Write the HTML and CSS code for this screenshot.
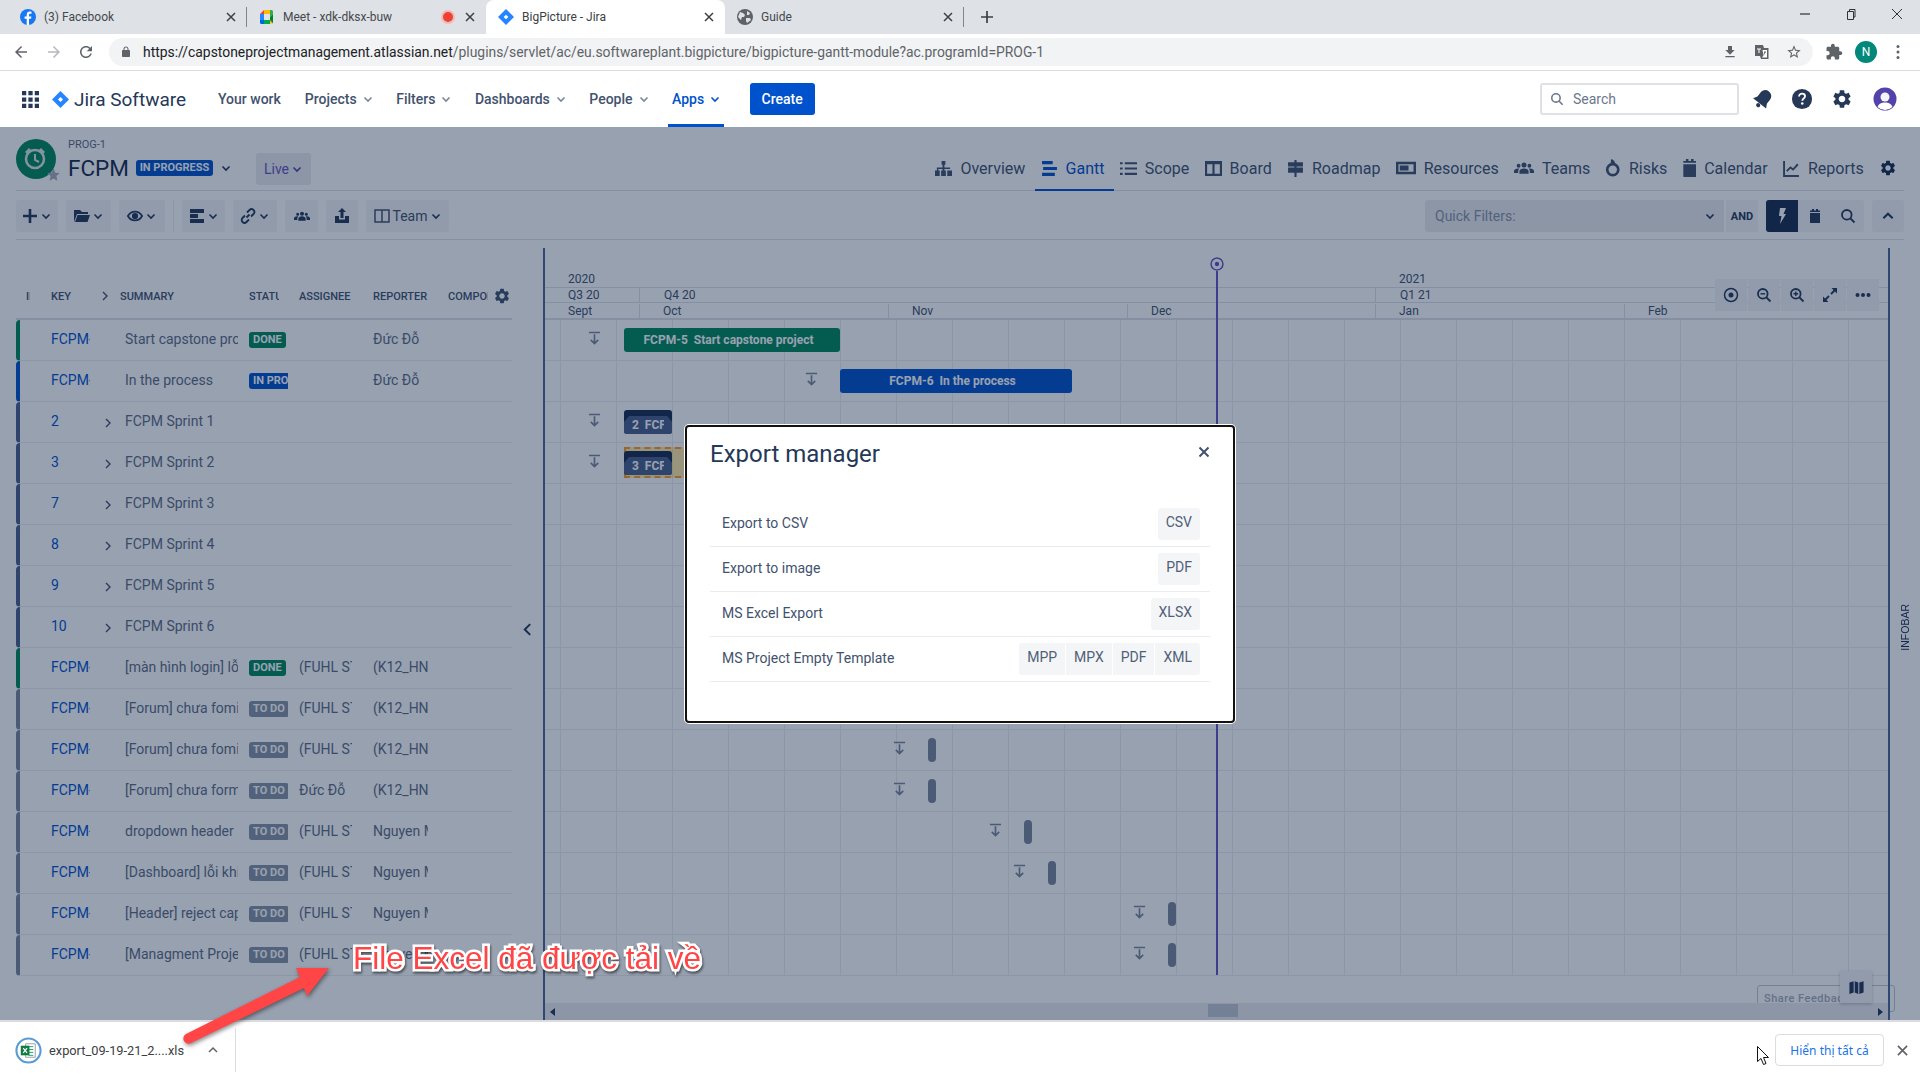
FILE: index.html
```html
<!DOCTYPE html>
<html lang="en">
<head>
    <meta charset="UTF-8">
    <title>BigPicture - Jira</title>
    <link rel="stylesheet" href="styles.css">
</head>
<body>
    <svg class="sprite" xmlns="http://www.w3.org/2000/svg">
        <symbol id="i-jira" viewBox="0 0 24 24"><path fill="#2684ff" d="M12 0l12 12-12 12L0 12z"/><path fill="#fff" d="M12 8.500l3.500 3.500-3.500 3.500L8.500 12z"/></symbol>
        <symbol id="i-x" viewBox="0 0 12 12"><path d="M2 2l8 8M10 2l-8 8" fill="none" stroke="currentColor" stroke-width="1.500"/></symbol>
        <symbol id="i-down" viewBox="0 0 12 12"><path d="M2.500 4.500L6 8l3.500-3.500" fill="none" stroke="currentColor" stroke-width="1.600"/></symbol>
        <symbol id="i-right" viewBox="0 0 12 12"><path d="M4 2l4 4-4 4" fill="none" stroke="currentColor" stroke-width="1.400"/></symbol>
        <symbol id="i-search" viewBox="0 0 16 16"><circle cx="6.800" cy="6.800" r="4.800" fill="none" stroke="currentColor" stroke-width="1.800"/><path d="M10.500 10.500L14.500 14.500" stroke="currentColor" stroke-width="1.800"/></symbol>
        <symbol id="i-gear" viewBox="0 0 24 24"><path fill="currentColor" d="M19.140 12.940c.04-.3.06-.61.06-.94 0-.32-.02-.64-.07-.94l2.030-1.580c.18-.14.23-.41.12-.61l-1.920-3.320c-.12-.22-.37-.29-.59-.22l-2.390.96c-.5-.38-1.030-.7-1.620-.94l-.36-2.540c-.04-.24-.24-.41-.48-.41h-3.840c-.24 0-.43.17-.47.41l-.36 2.540c-.59.24-1.130.57-1.620.94l-2.390-.96c-.22-.08-.47 0-.59.22L2.740 8.870c-.12.21-.08.47.12.61l2.030 1.580c-.05.3-.09.63-.09.94s.02.64.07.94l-2.030 1.580c-.18.14-.23.41-.12.61l1.920 3.320c.12.22.37.29.59.22l2.390-.96c.5.38 1.030.7 1.620.94l.36 2.540c.05.24.24.41.48.41h3.840c.24 0 .44-.17.47-.41l.36-2.540c.59-.24 1.130-.56 1.620-.94l2.390.96c.22.08.47 0 .59-.22l1.920-3.320c.12-.22.07-.47-.12-.61l-2.010-1.580zM12 15.600c-1.980 0-3.600-1.620-3.600-3.600s1.620-3.600 3.600-3.600 3.600 1.620 3.600 3.600-1.620 3.600-3.600 3.600z"/></symbol>
        <symbol id="i-people" viewBox="0 0 24 24"><path fill="currentColor" d="M12 5.500a3 3 0 110 6 3 3 0 010-6zM5.500 7a2.300 2.300 0 110 4.600 2.300 2.300 0 010-4.600zm13 0a2.300 2.300 0 110 4.600 2.300 2.300 0 010-4.600zM12 12.500c3 0 5.500 1.500 5.500 3.500v3h-11v-3c0-2 2.500-3.500 5.500-3.500zM5 12.500c.5 0 1 0 1.400.2C5.500 13.500 5 14.700 5 16v2H0v-2.500c0-1.600 2.200-3 5-3zm14 0c2.800 0 5 1.400 5 3V18h-5v-2c0-1.300-.5-2.500-1.400-3.300.4-.2.9-.2 1.400-.2z"/></symbol>
        <symbol id="i-cal" viewBox="0 0 16 16"><path fill="currentColor" d="M3 5h10v9.500a.5.5 0 01-.5.500h-9a.5.5 0 01-.5-.5zM3 2.500h2V1h2v1.500h2V1h2v1.500h2V4H3z"/></symbol>
        <symbol id="i-drop" viewBox="0 0 14 16"><path d="M1 1.500h12M7 3.500v10M3 9.500l4 4 4-4" fill="none" stroke="currentColor" stroke-width="1.800"/></symbol>
    </svg>

    <div class="tabstrip">
        <div class="tab tab-sep">
            <svg class="fav" viewBox="0 0 16 16"><circle cx="8" cy="8" r="8" fill="#1877f2"/><path fill="#fff" d="M9 16V9.800h2l.4-2.400H9V6c0-.7.3-1.200 1.300-1.200h1.200V2.700C11 2.600 10.400 2.500 9.800 2.500 8 2.500 6.700 3.600 6.700 5.700v1.700H4.600v2.400h2.100V16z"/></svg>
            <span class="tab-title">(3) Facebook</span>
            <svg class="tab-x"><use href="#i-x"/></svg>
        </div>
        <div class="tab">
            <svg class="fav" viewBox="0 0 16 16"><path fill="#ea4335" d="M1 5l4-4v4z"/><path fill="#fbbc04" d="M5 1h6v4H5z"/><path fill="#34a853" d="M11 1h1.500A1.500 1.500 0 0114 2.500V5l-3 3z"/><path fill="#00832d" d="M11 8l3-3v9.500l-3-3z"/><path fill="#2684fc" d="M1 5h4v6H1z"/><path fill="#0066da" d="M1 11h4v4H2.500A1.500 1.500 0 011 13.500z"/><path fill="#00ac47" d="M5 11h6v4H5z"/><path fill="#ffba00" d="M11 11l3 3.500H11z"/></svg>
            <span class="tab-title">Meet - xdk-dksx-buw</span>
            <span class="rec"></span>
            <svg class="tab-x"><use href="#i-x"/></svg>
        </div>
        <div class="tab tab-active">
            <svg class="fav"><use href="#i-jira"/></svg>
            <span class="tab-title">BigPicture - Jira</span>
            <svg class="tab-x"><use href="#i-x"/></svg>
        </div>
        <div class="tab tab-sep">
            <svg class="fav" viewBox="0 0 16 16"><circle cx="8" cy="8" r="8" fill="#5f6368"/><path fill="#dee1e6" d="M3 3l3 1 2 2-1 2-2 0-1 3-3-3zM10 2l3 2-1 2-2 0zM9 9l4 0 1 2-4 3-1-2z"/></svg>
            <span class="tab-title">Guide</span>
            <svg class="tab-x"><use href="#i-x"/></svg>
        </div>
        <svg class="new-tab" viewBox="0 0 12 12"><path d="M6 0v12M0 6h12" stroke="#3c4043" stroke-width="1.700"/></svg>
        <div class="win-controls">
            <svg viewBox="0 0 12 12"><path d="M1 6h10" stroke="#333" stroke-width="1.200"/></svg>
            <svg viewBox="0 0 12 12"><path d="M2.500 3.500h6v8h-6zM4.500 3.500v-2h5.500v7.500H8.500" fill="none" stroke="#333"/></svg>
            <svg viewBox="0 0 12 12"><path d="M1 1l10 10M11 1L1 11" stroke="#333"/></svg>
        </div>
    </div>

    <div class="addressbar">
        <svg class="addr-ico" viewBox="0 0 24 24"><path fill="#5f6368" d="M20 11H7.830l5.590-5.590L12 4l-8 8 8 8 1.410-1.410L7.830 13H20v-2z"/></svg>
        <svg class="addr-ico" viewBox="0 0 24 24"><path fill="#b5b8bc" d="M12 4l-1.410 1.410L16.170 11H4v2h12.170l-5.580 5.590L12 20l8-8z"/></svg>
        <svg class="addr-ico" viewBox="0 0 24 24"><path fill="#5f6368" d="M17.650 6.350C16.200 4.900 14.210 4 12 4c-4.420 0-7.990 3.580-7.990 8s3.570 8 7.990 8c3.730 0 6.840-2.550 7.730-6h-2.080c-.82 2.330-3.040 4-5.650 4-3.310 0-6-2.690-6-6s2.690-6 6-6c1.660 0 3.140.69 4.220 1.780L13 11h7V4l-2.350 2.350z"/></svg>
        <div class="omnibox">
            <svg class="lock" viewBox="0 0 24 24"><path fill="#5f6368" d="M18 8h-1V6c0-2.760-2.240-5-5-5S7 3.240 7 6v2H6c-1.100 0-2 .9-2 2v10c0 1.100.9 2 2 2h12c1.100 0 2-.9 2-2V10c0-1.100-.9-2-2-2zM9 6c0-1.660 1.340-3 3-3s3 1.340 3 3v2H9V6z"/></svg>
            <span class="url"><b>https://capstoneprojectmanagement.atlassian.net</b>/plugins/servlet/ac/eu.softwareplant.bigpicture/bigpicture-gantt-module?ac.programId=PROG-1</span>
            <svg class="omni-ico" viewBox="0 0 24 24"><path fill="#5f6368" d="M19 9h-4V3H9v6H5l7 7 7-7zM5 18v2h14v-2H5z"/></svg>
            <svg class="omni-ico" viewBox="0 0 16 16"><path fill="#5f6368" d="M1 1h8l1 3h4.500v11H7l-1-3H1z"/><path fill="#fff" d="M3 4.500h4v1H5.500V9h-1V5.500H3zM8.500 6h4.500v7.500H8l1.500-2z"/><path fill="#5f6368" d="M10 7.500h2v1h-.6l-1 2h-1l1-2H10z"/></svg>
            <svg class="omni-ico" viewBox="0 0 24 24"><path fill="#5f6368" d="M22 9.240l-7.190-.62L12 2 9.190 8.630 2 9.240l5.460 4.730L5.820 21 12 17.270 18.180 21l-1.630-7.030L22 9.240zM12 15.400l-3.760 2.270 1-4.280-3.320-2.880 4.380-.38L12 6.100l1.710 4.040 4.380.38-3.320 2.880 1 4.280L12 15.400z"/></svg>
        </div>
        <svg class="puzzle" viewBox="0 0 24 24"><path fill="#5f6368" d="M20.500 11H19V7c0-1.100-.9-2-2-2h-4V3.500C13 2.120 11.880 1 10.500 1S8 2.120 8 3.500V5H4c-1.100 0-1.990.9-1.990 2v3.800H3.500c1.490 0 2.700 1.210 2.700 2.700s-1.210 2.700-2.700 2.700H2V20c0 1.100.9 2 2 2h3.800v-1.500c0-1.490 1.210-2.700 2.700-2.700 1.490 0 2.700 1.210 2.700 2.700V22H17c1.100 0 2-.9 2-2v-4h1.500c1.380 0 2.500-1.120 2.500-2.500S21.880 11 20.500 11z"/></svg>
        <span class="chrome-avatar">N</span>
        <svg class="dots" viewBox="0 0 4 16"><circle cx="2" cy="2.500" r="1.500" fill="#5f6368"/><circle cx="2" cy="8" r="1.500" fill="#5f6368"/><circle cx="2" cy="13.500" r="1.500" fill="#5f6368"/></svg>
    </div>

    <nav class="topnav">
        <svg class="app-grid" viewBox="0 0 16 16"><path fill="#253858" d="M0 0h4v4H0zM6 0h4v4H6zM12 0h4v4h-4zM0 6h4v4H0zM6 6h4v4H6zM12 6h4v4h-4zM0 12h4v4H0zM6 12h4v4H6zM12 12h4v4h-4z"/></svg>
        <svg class="logo"><use href="#i-jira"/></svg>
        <span class="brand">Jira Software</span>
        <div class="nav-items">
            <a class="nav-item">Your work</a>
            <a class="nav-item">Projects<svg class="caret"><use href="#i-down"/></svg></a>
            <a class="nav-item">Filters<svg class="caret"><use href="#i-down"/></svg></a>
            <a class="nav-item">Dashboards<svg class="caret"><use href="#i-down"/></svg></a>
            <a class="nav-item">People<svg class="caret"><use href="#i-down"/></svg></a>
            <a class="nav-item nav-active">Apps<svg class="caret"><use href="#i-down"/></svg></a>
            <button class="create">Create</button>
        </div>
        <div class="nav-right">
            <div class="search"><svg><use href="#i-search"/></svg><span>Search</span></div>
            <svg class="nav-ico nav-bell" viewBox="0 0 24 24"><g transform="rotate(38 12 12)"><path fill="#253858" d="M12 1.500c-4 0-6.500 3-6.500 6.800v5.200L3 18h18l-2.500-4.500V8.300c0-3.800-2.500-6.800-6.500-6.800z"/><circle cx="12" cy="20.500" r="2.300" fill="#253858"/></g></svg>
            <svg class="nav-ico" viewBox="0 0 24 24"><circle cx="12" cy="12" r="11" fill="#253858"/><path d="M8.800 9.300c0-2 1.500-3.100 3.300-3.100 1.900 0 3.200 1.100 3.200 2.800 0 2.400-3 2.500-3 4.900" fill="none" stroke="#fff" stroke-width="2"/><circle cx="12.300" cy="17" r="1.400" fill="#fff"/></svg>
            <svg class="nav-ico" viewBox="0 0 24 24"><use href="#i-gear" color="#253858"/></svg>
            <svg class="nav-ico nav-user" viewBox="0 0 24 24"><circle cx="12" cy="12" r="11.500" fill="#5243aa"/><circle cx="12" cy="10" r="4.500" fill="#fff" opacity=".95"/><path d="M4.500 20c1.500-3.500 4-4.500 7.500-4.500s6 1 7.500 4.500A11 11 0 014.500 20z" fill="#fff"/></svg>
        </div>
    </nav>

    <main class="app">
        <header class="project-head">
            <div class="project-logo">
                <svg viewBox="0 0 40 40"><circle cx="20" cy="20" r="20" fill="#00875a"/><circle cx="19" cy="20" r="9" fill="none" stroke="#dfe7e4" stroke-width="2.500"/><path d="M19 15v6l4 2" fill="none" stroke="#dfe7e4" stroke-width="2"/><path fill="#dfe7e4" d="M9 13l4-4 2 2-4 4zM29 13l-4-4-2 2 4 4z"/></svg>
                <svg class="fav-star" viewBox="0 0 24 24"><path fill="#a5adba" d="M12 2l3 7 7 .6-5.400 4.700L18.200 22 12 18.300 5.800 22l1.600-7.700L2 9.600 9 9z"/></svg>
            </div>
            <div class="project-name">
                <div class="project-key">PROG-1</div>
                <div class="project-title">
                    <span class="title">FCPM</span>
                    <span class="state">IN PROGRESS</span>
                    <svg class="state-caret"><use href="#i-down"/></svg>
                </div>
            </div>
            <div class="live">Live<svg class="caret"><use href="#i-down"/></svg></div>
            <div class="view-tabs">
                <a class="view-tab"><svg viewBox="0 0 18 16"><path fill="currentColor" d="M7 0h4v4H7zM8 4h2v3h6v3h2v0h-2V8.500H10V10H8V8.500H3.500V10H2V7h6zM0 10h5v6H0zM6.500 10h5v6h-5zM13 10h5v6h-5z"/></svg>Overview</a>
                <a class="view-tab view-active"><svg viewBox="0 0 16 16"><path fill="currentColor" d="M1 1h10v3H1zM2 6.500h13v3H2zM1 12h12v3H1z"/></svg>Gantt</a>
                <a class="view-tab"><svg viewBox="0 0 16 16"><path fill="currentColor" d="M0 2h2.500v2H0zM4.500 2H16v2H4.500zM0 7h2.500v2H0zM4.500 7H16v2H4.500zM0 12h2.500v2H0zM4.500 12H16v2H4.500z"/></svg>Scope</a>
                <a class="view-tab"><svg viewBox="0 0 16 16"><path fill="none" stroke="currentColor" stroke-width="2" d="M1 2h14v12H1zM8 2v12"/><path fill="currentColor" d="M1 2h14v2H1z"/></svg>Board</a>
                <a class="view-tab"><svg viewBox="0 0 16 16"><path fill="currentColor" d="M7 0h2v2h6v4H9v1h6v5H9v4H7v-4H1V7h6V6H1V2h6z"/></svg>Roadmap</a>
                <a class="view-tab vt-wide"><svg viewBox="0 0 16 16"><path fill="none" stroke="currentColor" stroke-width="2" d="M1 4h14v8H1z"/><path fill="currentColor" d="M3 6h7v4H3z"/></svg>Resources</a>
                <a class="view-tab vt-wide"><svg viewBox="0 0 24 24"><use href="#i-people"/></svg>Teams</a>
                <a class="view-tab vt-risk"><svg viewBox="1 0 14 16"><path fill="none" stroke="currentColor" stroke-width="2.400" d="M8 4.500a5 5 0 110 10 5 5 0 010-10z"/><path fill="currentColor" d="M6.500 0c1.500 0 3.500 1.500 4 5H6z"/></svg>Risks</a>
                <a class="view-tab vt-cal"><svg viewBox="3 1 10 14"><path fill="currentColor" d="M3 5h10v9.500a.5.5 0 01-.5.500h-9a.5.5 0 01-.5-.5zM3 2.500h2V1h2v1.500h2V1h2v1.500h2V4H3z"/></svg>Calendar</a>
                <a class="view-tab"><svg viewBox="0 0 16 16"><path fill="none" stroke="currentColor" stroke-width="1.800" d="M1 1v14h14M3.500 10.500L7 7l2.500 2L14 4"/></svg>Reports</a>
                <svg class="view-gear" viewBox="0 0 24 24"><use href="#i-gear"/></svg>
            </div>
        </header>

        <div class="toolbar">
            <div class="tool tool-add"><svg class="t-ico" viewBox="0 0 16 16"><path d="M8 1v14M1 8h14" stroke="currentColor" stroke-width="2.600"/></svg><svg class="caret"><use href="#i-down"/></svg></div>
            <div class="tool tool-w45"><svg class="t-ico" viewBox="0 0 16 16"><path fill="currentColor" d="M0 2h6l2 2h6v2H3L0 14zM3.500 7H16l-2.500 7H1z"/></svg><svg class="caret"><use href="#i-down"/></svg></div>
            <div class="tool tool-w46"><svg class="t-ico" viewBox="0 0 18 16"><path fill="none" stroke="currentColor" stroke-width="2" d="M1 8c2-3.500 4.500-5 8-5s6 1.500 8 5c-2 3.500-4.500 5-8 5s-6-1.500-8-5z"/><circle cx="9" cy="8" r="3.500" fill="currentColor"/></svg><svg class="caret"><use href="#i-down"/></svg></div>
            <span class="tool-sep"></span>
            <div class="tool tool-w43"><svg class="t-ico" viewBox="0 0 16 16"><path fill="currentColor" d="M1 1h14v4H1zM1 6h8v4H1zM1 11h14v4H1z"/></svg><svg class="caret"><use href="#i-down"/></svg></div>
            <div class="tool tool-w44"><svg class="t-ico" viewBox="0 0 16 16"><path fill="none" stroke="currentColor" stroke-width="1.800" d="M6.500 9.500l3-3M5 7.500l-2.500 2.500a2.800 2.800 0 004 4l2.500-2.500M11 8.500l2.500-2.500a2.800 2.800 0 00-4-4L7 4.500"/></svg><svg class="caret"><use href="#i-down"/></svg></div>
            <div class="tool tool-w33"><svg class="t-ico" viewBox="0 0 24 24"><use href="#i-people"/></svg></div>
            <div class="tool tool-w32"><svg class="t-ico" viewBox="0 0 16 16"><path fill="currentColor" d="M8 0l4 4H9.500v6h-3V4H4zM1 8h4v3.500h6V8h4v7H1z"/></svg></div>
            <div class="tool tool-team"><svg class="t-ico" viewBox="0 0 16 16"><path fill="none" stroke="currentColor" stroke-width="1.500" d="M1 2h14v12H1zM8 2v12"/></svg><span>Team</span><svg class="caret"><use href="#i-down"/></svg></div>
            <div class="toolbar-right">
                <div class="quick">Quick Filters:<svg class="caret"><use href="#i-down"/></svg></div>
                <div class="tool tool-and">AND</div>
                <div class="tool tool-bolt"><svg class="t-ico" viewBox="0 0 16 16"><path fill="#fff" d="M6 0h6L9.500 6H12L6 16l1.500-8H5z"/></svg></div>
                <div class="tool tool-cal"><svg class="t-ico" viewBox="0 0 16 16"><use href="#i-cal"/></svg></div>
                <div class="tool tool-find"><svg class="t-ico"><use href="#i-search"/></svg></div>
                <div class="tool tool-up"><svg class="t-ico" viewBox="0 0 12 12"><path d="M2 8l4-4 4 4" fill="none" stroke="currentColor" stroke-width="1.800"/></svg></div>
            </div>
        </div>

        <section class="gantt">
            <div class="grid-panel">
                <div class="grid-head">
                    <span class="h-id">ID</span>
                    <span class="h-key">KEY</span>
                    <svg class="h-arrow"><use href="#i-right"/></svg>
                    <span class="h-summary">SUMMARY</span>
                    <span class="h-status">STATUS</span>
                    <span class="h-assignee">ASSIGNEE</span>
                    <span class="h-reporter">REPORTER</span>
                    <span class="h-compo">COMPONENT</span>
                    <svg class="h-gear" viewBox="0 0 24 24"><use href="#i-gear"/></svg>
                </div>
                <div class="row row-green"><span class="c-key">FCPM-5</span><span class="c-exp"></span><span class="c-sum">Start capstone project</span><span class="c-status"><i class="badge b-done">DONE</i></span><span class="c-ass"></span><span class="c-rep">Đức Đỗ</span></div>
                <div class="row row-blue"><span class="c-key">FCPM-6</span><span class="c-exp"></span><span class="c-sum">In the process</span><span class="c-status"><i class="badge b-prog">IN PROGRESS</i></span><span class="c-ass"></span><span class="c-rep">Đức Đỗ</span></div>
                <div class="row row-navy"><span class="c-key">2</span><span class="c-exp"><svg><use href="#i-right"/></svg></span><span class="c-sum">FCPM Sprint 1</span></div>
                <div class="row row-navy"><span class="c-key">3</span><span class="c-exp"><svg><use href="#i-right"/></svg></span><span class="c-sum">FCPM Sprint 2</span></div>
                <div class="row row-navy"><span class="c-key">7</span><span class="c-exp"><svg><use href="#i-right"/></svg></span><span class="c-sum">FCPM Sprint 3</span></div>
                <div class="row row-navy"><span class="c-key">8</span><span class="c-exp"><svg><use href="#i-right"/></svg></span><span class="c-sum">FCPM Sprint 4</span></div>
                <div class="row row-navy"><span class="c-key">9</span><span class="c-exp"><svg><use href="#i-right"/></svg></span><span class="c-sum">FCPM Sprint 5</span></div>
                <div class="row row-navy"><span class="c-key">10</span><span class="c-exp"><svg><use href="#i-right"/></svg></span><span class="c-sum">FCPM Sprint 6</span></div>
                <div class="row row-green"><span class="c-key">FCPM-11</span><span class="c-exp"></span><span class="c-sum">[màn hình login] lỗi</span><span class="c-status"><i class="badge b-done">DONE</i></span><span class="c-ass">(FUHL STAFF)</span><span class="c-rep">(K12_HN_FPT)</span></div>
                <div class="row row-grey"><span class="c-key">FCPM-12</span><span class="c-exp"></span><span class="c-sum">[Forum] chưa fomi</span><span class="c-status"><i class="badge b-todo">TO DO</i></span><span class="c-ass">(FUHL STAFF)</span><span class="c-rep">(K12_HN_FPT)</span></div>
                <div class="row row-grey"><span class="c-key">FCPM-13</span><span class="c-exp"></span><span class="c-sum">[Forum] chưa fomi</span><span class="c-status"><i class="badge b-todo">TO DO</i></span><span class="c-ass">(FUHL STAFF)</span><span class="c-rep">(K12_HN_FPT)</span></div>
                <div class="row row-grey"><span class="c-key">FCPM-14</span><span class="c-exp"></span><span class="c-sum">[Forum] chưa format</span><span class="c-status"><i class="badge b-todo">TO DO</i></span><span class="c-ass">Đức Đỗ</span><span class="c-rep">(K12_HN_FPT)</span></div>
                <div class="row row-grey"><span class="c-key">FCPM-15</span><span class="c-exp"></span><span class="c-sum">dropdown header</span><span class="c-status"><i class="badge b-todo">TO DO</i></span><span class="c-ass">(FUHL STAFF)</span><span class="c-rep">Nguyen Minh</span></div>
                <div class="row row-grey"><span class="c-key">FCPM-16</span><span class="c-exp"></span><span class="c-sum">[Dashboard] lỗi khi</span><span class="c-status"><i class="badge b-todo">TO DO</i></span><span class="c-ass">(FUHL STAFF)</span><span class="c-rep">Nguyen Minh</span></div>
                <div class="row row-grey"><span class="c-key">FCPM-17</span><span class="c-exp"></span><span class="c-sum">[Header] reject cap</span><span class="c-status"><i class="badge b-todo">TO DO</i></span><span class="c-ass">(FUHL STAFF)</span><span class="c-rep">Nguyen Minh</span></div>
                <div class="row row-grey"><span class="c-key">FCPM-18</span><span class="c-exp"></span><span class="c-sum">[Managment Project]</span><span class="c-status"><i class="badge b-todo">TO DO</i></span><span class="c-ass">(FUHL STAFF)</span><span class="c-rep">Nguyen Minh</span></div>
                <svg class="collapse" viewBox="0 0 10 16"><path d="M8 2L2 8l6 6" fill="none" stroke="currentColor" stroke-width="2.200"/></svg>
            </div>

            <div class="feedback">Share Feedback</div>

            <div class="chart">
                <div class="tl-row tl-year">
                    <span class="tl-label" style="left:-1px">2020</span>
                    <span class="tl-label" style="left:830px">2021</span>
                </div>
                <div class="tl-row tl-quarter">
                    <span class="tl-label" style="left:-1px">Q3 20</span>
                    <span class="tl-label tl-tick" style="left:94px">Q4 20</span>
                    <span class="tl-label tl-tick" style="left:830px">Q1 21</span>
                </div>
                <div class="tl-row tl-month">
                    <span class="tl-label" style="left:0">Sept</span>
                    <span class="tl-label tl-tick" style="left:94px">Oct</span>
                    <span class="tl-label tl-tick" style="left:343px">Nov</span>
                    <span class="tl-label tl-tick" style="left:582px">Dec</span>
                    <span class="tl-label tl-tick" style="left:830px">Jan</span>
                    <span class="tl-label tl-tick" style="left:1079px">Feb</span>
                </div>
                <div class="chart-body">
                    <div class="c-row">
                        <svg class="drop" style="left:43px"><use href="#i-drop"/></svg>
                        <div class="bar bar-green" style="left:79px;width:216px">FCPM-5&nbsp;&nbsp;Start capstone project</div>
                    </div>
                    <div class="c-row">
                        <svg class="drop" style="left:260px"><use href="#i-drop"/></svg>
                        <div class="bar bar-blue" style="left:295px;width:232px">FCPM-6&nbsp;&nbsp;In the process</div>
                    </div>
                    <div class="c-row">
                        <svg class="drop" style="left:43px"><use href="#i-drop"/></svg>
                        <div class="sprint" style="left:79px;width:48px"><span>2&nbsp;&nbsp;FCPM Sprint 1</span></div>
                    </div>
                    <div class="c-row">
                        <svg class="drop" style="left:43px"><use href="#i-drop"/></svg>
                        <div class="sprint-range" style="left:79px;width:220px"></div>
                        <div class="sprint" style="left:79px;width:48px"><span>3&nbsp;&nbsp;FCPM Sprint 2</span></div>
                    </div>
                    <div class="c-row"></div>
                    <div class="c-row"></div>
                    <div class="c-row"></div>
                    <div class="c-row"></div>
                    <div class="c-row"></div>
                    <div class="c-row"></div>
                    <div class="c-row">
                        <svg class="drop" style="left:348px"><use href="#i-drop"/></svg>
                        <div class="tick" style="left:383px"></div>
                    </div>
                    <div class="c-row">
                        <svg class="drop" style="left:348px"><use href="#i-drop"/></svg>
                        <div class="tick" style="left:383px"></div>
                    </div>
                    <div class="c-row">
                        <svg class="drop" style="left:444px"><use href="#i-drop"/></svg>
                        <div class="tick" style="left:479px"></div>
                    </div>
                    <div class="c-row">
                        <svg class="drop" style="left:468px"><use href="#i-drop"/></svg>
                        <div class="tick" style="left:503px"></div>
                    </div>
                    <div class="c-row">
                        <svg class="drop" style="left:588px"><use href="#i-drop"/></svg>
                        <div class="tick" style="left:623px"></div>
                    </div>
                    <div class="c-row">
                        <svg class="drop" style="left:588px"><use href="#i-drop"/></svg>
                        <div class="tick" style="left:623px"></div>
                    </div>
                </div>
                <div class="today" style="left:671px">
                    <svg viewBox="0 0 14 14"><circle cx="7" cy="7" r="6" fill="none" stroke="#6554c0" stroke-width="1.600"/><circle cx="7" cy="7" r="2.200" fill="#6554c0"/></svg>
                </div>
                <div class="zoom-tools">
                    <span><svg viewBox="0 0 16 16"><circle cx="8" cy="8" r="6.500" fill="none" stroke="currentColor" stroke-width="1.500"/><circle cx="8" cy="8" r="2.500" fill="currentColor"/></svg></span>
                    <span><svg viewBox="0 0 16 16"><use href="#i-search"/><path d="M4.500 6.800h4.600" stroke="currentColor" stroke-width="1.400"/></svg></span>
                    <span><svg viewBox="0 0 16 16"><use href="#i-search"/><path d="M4.500 6.800h4.600M6.800 4.500v4.600" stroke="currentColor" stroke-width="1.400"/></svg></span>
                    <span><svg viewBox="0 0 16 16"><path d="M9 7l5-5M7 9l-5 5" stroke="currentColor" stroke-width="1.800"/><path fill="currentColor" d="M9.500 1H15v5.500zM1 9.500V15h5.500z"/></svg></span>
                    <span><svg viewBox="0 0 16 16"><circle cx="2.500" cy="8" r="2" fill="currentColor"/><circle cx="8" cy="8" r="2" fill="currentColor"/><circle cx="13.500" cy="8" r="2" fill="currentColor"/></svg></span>
                </div>
                <div class="h-scroll">
                    <svg class="sc-arrow" viewBox="0 0 6 8"><path fill="#253858" d="M5 0v8L0 4z"/></svg>
                    <span class="sc-thumb"></span>
                    <svg class="sc-arrow" viewBox="0 0 6 8"><path fill="#253858" d="M1 0v8l5-4z"/></svg>
                </div>
            </div>

            <div class="minimap">
                <svg viewBox="0 0 24 24"><path fill="#253858" d="M2 5l6-2v16l-6 2zM9.500 3l5 2v16l-5-2zM16 5l6-2v16l-6 2z"/></svg>
            </div>
            <div class="infobar"><span>INFOBAR</span></div>
        </section>

        <div class="blanket">
            <div class="modal">
                <div class="modal-head">
                    <h2>Export manager</h2>
                    <svg class="modal-close" viewBox="0 0 12 12"><path d="M1.500 1.500l9 9M10.500 1.500l-9 9" stroke="#42526e" stroke-width="2"/></svg>
                </div>
                <div class="exp-row"><span>Export to CSV</span><div class="exp-btns"><button>CSV</button></div></div>
                <div class="exp-row"><span>Export to image</span><div class="exp-btns"><button>PDF</button></div></div>
                <div class="exp-row"><span>MS Excel Export</span><div class="exp-btns"><button>XLSX</button></div></div>
                <div class="exp-row"><span>MS Project Empty Template</span><div class="exp-btns"><button>MPP</button><button>MPX</button><button>PDF</button><button>XML</button></div></div>
            </div>
        </div>
    </main>

    <footer class="downloads">
        <svg class="xls" viewBox="0 0 28 28"><circle cx="14" cy="14" r="12.500" fill="#fff" stroke="#5b9bd5" stroke-width="2.200"/><path fill="#fff" stroke="#9aa0a6" d="M11 7h10v14H11z"/><path stroke="#21a366" d="M14 10h5M14 13h5M14 16h5M14 19h5"/><path fill="#107c41" d="M6 9h9v10H6z"/><path d="M8.500 11.500l4 5M12.500 11.500l-4 5" stroke="#fff" stroke-width="1.300"/></svg>
        <span class="dl-name">export_09-19-21_2....xls</span>
        <svg class="dl-caret" viewBox="0 0 12 12"><path d="M2 8l4-4 4 4" fill="none" stroke="#5f6368" stroke-width="1.500"/></svg>
        <span class="dl-sep"></span>
        <svg class="pointer" viewBox="0 0 12 20"><path d="M.5.500v15l3.500-3 2.500 6 2.500-1-2.500-6h5z" fill="#fff" stroke="#111"/></svg>
        <button class="show-all">Hiển thị tất cả</button>
        <svg class="dl-close" viewBox="0 0 12 12"><path d="M1 1l10 10M11 1L1 11" stroke="#5f6368" stroke-width="1.800"/></svg>
    </footer>

    <svg class="note-arrow" viewBox="0 0 147 78">
        <path fill="#ff4545" d="M146 2L113 2 117 11 3 68A5 5 0 008 77L121 22 124 30z"/>
    </svg>
    <div class="note-text">File Excel đã được tải về</div>
</body>
</html>
```

FILE: styles.css
```css
* {
    box-sizing: border-box;
}
html, body {
    height: 100%;
}
body {
    margin: 0;
    height: 1078px;
    overflow: hidden;
    position: relative;
    display: flex;
    flex-direction: column;
    font-family: Roboto, "Noto Sans", sans-serif;
    font-size: 14px;
    color: #172b4d;
    background: #fff;
}
svg {
    display: block;
    flex: none;
}
.sprite {
    position: absolute;
    width: 0;
    height: 0;
}

/* browser chrome */
.tabstrip {
    height: 34px;
    flex: none;
    display: flex;
    align-items: center;
    padding-left: 8px;
    background: #dee1e6;
}
.tab {
    position: relative;
    width: 239px;
    height: 34px;
    display: flex;
    align-items: center;
    padding: 0 10px 0 12px;
    font-size: 12px;
    color: #45494d;
}
.tab-sep::after {
    content: "";
    position: absolute;
    right: 0;
    top: 7px;
    height: 20px;
    width: 1px;
    background: #80868b;
}
.tab-active {
    background: #fff;
    border-radius: 8px 8px 0 0;
    color: #3c4043;
}
.fav {
    width: 16px;
    height: 16px;
    margin-right: 8px;
}
.tab-title {
    flex: 1;
    white-space: nowrap;
    overflow: hidden;
}
.tab-x {
    width: 12px;
    height: 12px;
    color: #3c4043;
}
.rec {
    width: 14px;
    height: 14px;
    margin-right: 9px;
    border-radius: 50%;
    background: #ea4335;
    border: 2px solid #f6b9b3;
}
.new-tab {
    width: 12px;
    height: 12px;
    margin-left: 17px;
}
.win-controls {
    margin-left: auto;
    margin-right: 17px;
    margin-top: -6px;
    display: flex;
    gap: 34px;
}
.win-controls svg {
    width: 12px;
    height: 12px;
}
.addressbar {
    height: 37px;
    flex: none;
    display: flex;
    align-items: center;
    border-bottom: 1px solid #dadce0;
    padding: 0 14px 1px 12px;
}
.addr-ico {
    width: 18px;
    height: 18px;
    margin-right: 15px;
}
.addr-ico:nth-child(2) {
    margin-right: 14px;
}
.addr-ico:nth-child(3) {
    margin-right: 14px;
}
.omnibox {
    width: 1704px;
    height: 28px;
    flex: none;
    display: flex;
    align-items: center;
    padding: 0 11px 0 11px;
    border-radius: 14px;
    background: #f1f3f4;
}
.lock {
    width: 12px;
    height: 12px;
    margin-right: 11px;
}
.url {
    flex: 1;
    font-size: 13.9px;
    color: #5f6368;
    white-space: nowrap;
}
.url b {
    font-weight: 400;
    color: #202124;
}
.omni-ico {
    width: 16px;
    height: 16px;
    margin-left: 16px;
}
.puzzle {
    width: 18px;
    height: 18px;
    margin-left: 12px;
}
.chrome-avatar {
    width: 22px;
    height: 22px;
    margin-left: 12px;
    border-radius: 50%;
    background: #00897b;
    color: #fff;
    font-size: 12px;
    line-height: 22px;
    text-align: center;
}
.dots {
    width: 4px;
    height: 16px;
    margin-left: 19px;
}

/* jira nav */
.topnav {
    height: 56px;
    flex: none;
    display: flex;
    align-items: center;
    padding-left: 22px;
}
.app-grid {
    width: 17px;
    height: 17px;
}
.logo {
    width: 17px;
    height: 17px;
    margin-left: 13px;
}
.brand {
    margin-left: 5px;
    width: 144px;
    font-size: 19px;
    font-weight: 400;
    color: #253858;
}
.nav-items {
    display: flex;
    align-items: center;
    gap: 24px;
    height: 100%;
}
.nav-item {
    position: relative;
    height: 100%;
    display: flex;
    align-items: center;
    font-weight: 500;
    color: #42526e;
}
.caret {
    width: 12px;
    height: 12px;
    margin-left: 6px;
    color: #7a869a;
}
.nav-item .caret {
    margin-left: 5px;
    margin-right: -1.5px;
}
.nav-active {
    color: #0052cc;
}
.nav-active .caret {
    color: #0052cc;
}
.nav-active::after {
    content: "";
    position: absolute;
    left: -4px;
    right: -4px;
    bottom: 0;
    height: 3px;
    background: #0052cc;
}
.create {
    width: 65px;
    height: 32px;
    margin-left: 6px;
    border: 0;
    border-radius: 3px;
    background: #0052cc;
    color: #fff;
    font: 500 14px Roboto, sans-serif;
}
.nav-right {
    margin-left: auto;
    margin-right: 24px;
    display: flex;
    align-items: center;
    gap: 18px;
}
.search {
    width: 199px;
    height: 32px;
    display: flex;
    align-items: center;
    gap: 9px;
    margin-right: -5px;
    padding-left: 8px;
    border: 2px solid #dfe1e6;
    border-radius: 3px;
    color: #6b778c;
}
.search svg {
    width: 14px;
    height: 14px;
}
.nav-ico {
    width: 22px;
    height: 22px;
    color: #253858;
}
.nav-bell {
    margin-right: -1px;
}
.nav-user {
    margin-left: 2px;
    margin-right: -1px;
    width: 24px;
    height: 24px;
}

/* page under the blanket */
.app {
    position: relative;
    flex: 1;
    display: flex;
    flex-direction: column;
    overflow: hidden;
}
.blanket {
    position: absolute;
    inset: 0;
    z-index: 10;
    display: flex;
    align-items: center;
    justify-content: center;
    background: rgba(9, 30, 66, 0.42);
}
.project-head {
    height: 64px;
    flex: none;
    display: flex;
    margin: 0 16px;
    padding-top: 12px;
    border-bottom: 1px solid #dfe1e6;
}
.project-logo {
    position: relative;
    width: 40px;
    height: 40px;
}
.project-logo svg {
    width: 40px;
    height: 40px;
}
.project-logo .fav-star {
    position: absolute;
    right: -5px;
    bottom: -3px;
    width: 15px;
    height: 15px;
}
.project-name {
    margin-left: 12px;
}
.project-key {
    font-size: 11px;
    line-height: 12px;
    color: #5e6c84;
}
.project-title {
    display: flex;
    align-items: center;
    height: 30px;
    margin-top: 2px;
}
.title {
    font-size: 22.5px;
    width: 68px;
    color: #172b4d;
}
.state {
    width: 77px;
    height: 16px;
    border-radius: 3px;
    background: #0052cc;
    color: #fff;
    font-size: 11px;
    font-weight: 700;
    line-height: 16px;
    text-align: center;
}
.state-caret {
    width: 12px;
    height: 12px;
    margin-left: 7px;
    color: #253858;
}
.live {
    width: 55px;
    height: 32px;
    margin: 14px 0 0 24px;
    display: flex;
    align-items: center;
    justify-content: center;
    border-radius: 3px;
    background: #ebecf0;
    color: #6554c0;
}
.live .caret {
    margin-left: 2px;
    color: #5243aa;
}
.view-tabs {
    margin-left: auto;
    display: flex;
    gap: 15.3px;
    padding-right: 7px;
    height: 52px;
}
.view-tab {
    position: relative;
    height: 100%;
    display: flex;
    align-items: center;
    gap: 8px;
    padding-top: 6px;
    font-size: 16px;
    color: #42526e;
    white-space: nowrap;
}
.view-tab svg {
    width: 17px;
    height: 17px;
    fill: currentColor;
}
.vt-wide svg {
    width: 20px;
    height: 20px;
}
.vt-risk svg {
    width: 15.5px;
    height: 18px;
}
.vt-cal svg {
    width: 13.5px;
    height: 18px;
}
.view-active {
    color: #0052cc;
}
.view-active::after {
    content: "";
    position: absolute;
    left: -6px;
    right: -9px;
    bottom: 0;
    height: 2px;
    background: #0052cc;
}
.view-gear {
    width: 18px;
    height: 18px;
    margin-top: 20px;
    fill: #42526e;
}
.toolbar {
    height: 49px;
    flex: none;
    display: flex;
    align-items: flex-start;
    gap: 8px;
    margin: 0 16px;
    padding-top: 9px;
    border-bottom: 1px solid #dfe1e6;
}
.tool {
    height: 32px;
    display: flex;
    align-items: center;
    justify-content: center;
    border-radius: 3px;
    background: #f4f5f7;
    color: #253858;
}
.tool .caret {
    margin-left: 2px;
    color: #253858;
}
.t-ico {
    width: 16px;
    height: 16px;
    fill: currentColor;
}
.tool-add {
    width: 42px;
}
.tool-w45 {
    width: 45px;
}
.tool-w46 {
    width: 46px;
}
.tool-w43 {
    width: 43px;
}
.tool-w44 {
    width: 44px;
}
.tool-w33 {
    width: 33px;
}
.tool-w32 {
    width: 32px;
}
.tool-team {
    width: 83px;
    color: #42526e;
}
.tool-team span {
    margin-left: 3px;
}
.tool-sep {
    width: 1px;
    height: 32px;
    background: #ebecf0;
}
.toolbar-right {
    margin-left: auto;
    display: flex;
}
.quick {
    width: 299px;
    height: 32px;
    display: flex;
    align-items: center;
    justify-content: space-between;
    padding: 0 8px 0 10px;
    border-radius: 3px 0 0 3px;
    background: #ebecf0;
    color: #8993a4;
}
.quick .caret {
    color: #253858;
}
.tool-and {
    width: 32px;
    margin-left: 2px;
    border-radius: 0;
    font-size: 11px;
    font-weight: 700;
}
.tool-bolt {
    width: 32px;
    margin-left: 8px;
    border-radius: 3px 0 0 3px;
    background: #172b4d;
}
.tool-cal {
    width: 34px;
    border-radius: 0;
}
.tool-find {
    width: 32px;
    border-radius: 0 3px 3px 0;
}
.tool-up {
    width: 32px;
    margin-left: 8px;
}
.tool-up .t-ico {
    width: 14px;
    height: 14px;
}

/* gantt */
.gantt {
    position: relative;
    flex: 1;
    display: flex;
    min-height: 0;
}
.grid-panel {
    position: relative;
    width: 543px;
    flex: none;
    padding-left: 16px;
}
.grid-head {
    width: 496px;
    height: 80px;
    display: flex;
    align-items: center;
    padding-top: 34px;
    border-bottom: 2px solid #dfe1e6;
    font-size: 11px;
    font-weight: 500;
    color: #42526e;
    white-space: nowrap;
}
.grid-head span {
    overflow: hidden;
}
.h-id {
    width: 4px;
    margin-left: 10px;
}
.h-key {
    width: 37px;
    margin-left: 21px;
}
.h-arrow {
    width: 12px;
    height: 12px;
    margin-left: 11px;
}
.h-summary {
    width: 129px;
    margin-left: 9px;
}
.h-status {
    width: 30px;
}
.h-assignee {
    width: 60px;
    margin-left: 20px;
}
.h-reporter {
    width: 60px;
    margin-left: 14px;
}
.h-compo {
    width: 40px;
    margin-left: 15px;
}
.h-gear {
    width: 18px;
    height: 18px;
    margin-left: 5px;
    fill: #253858;
}
.row {
    width: 496px;
    height: 41px;
    display: flex;
    align-items: center;
    padding-bottom: 2px;
    border-left: 4px solid #8993a4;
    border-bottom: 1px solid #ebecf0;
    border-radius: 4px 0 0 4px;
    color: #5e6c84;
    white-space: nowrap;
}
.row-green {
    border-left-color: #00875a;
}
.row-blue {
    border-left-color: #0052cc;
}
.row-navy {
    border-left-color: #4a5f8a;
}
.row-grey {
    border-left-color: #7a869a;
}
.row span {
    overflow: hidden;
}
.c-key {
    width: 39px;
    margin-left: 31px;
    color: #0052cc;
}
.c-exp {
    width: 35px;
}
.c-exp svg {
    width: 12px;
    height: 12px;
    margin: 3px 0 0 12px;
    color: #42526e;
}
.c-sum {
    width: 113px;
}
.c-status {
    width: 39px;
    margin: 2px 0 0 11px;
    display: flex;
}
.badge {
    height: 16px;
    padding: 0 4px;
    flex: none;
    border-radius: 3px;
    font-size: 11px;
    font-style: normal;
    font-weight: 700;
    line-height: 16px;
    color: #fff;
}
.b-done {
    background: #00875a;
}
.b-prog {
    background: #0052cc;
    border-radius: 3px 0 0 3px;
}
.b-todo {
    background: #8993a4;
}
.c-ass {
    width: 53px;
    margin-left: 11px;
}
.c-rep {
    width: 55px;
    margin-left: 21px;
}
.collapse {
    position: absolute;
    left: 523px;
    top: 382px;
    width: 9px;
    height: 15px;
    color: #253858;
}
.chart {
    position: relative;
    width: 1347px;
    flex: none;
    margin-top: 8px;
    display: flex;
    flex-direction: column;
    border-left: 2px solid #4c6494;
    border-right: 2px solid #4c6494;
    overflow: hidden;
}
.tl-row {
    position: relative;
    flex: none;
    border-bottom: 1px solid #dfe1e6;
    color: #42526e;
    font-size: 12px;
}
.tl-year {
    height: 40px;
}
.tl-quarter {
    height: 15px;
}
.tl-month {
    height: 17px;
    border-bottom-width: 2px;
}
.tl-label {
    position: absolute;
    bottom: 0;
    height: 14px;
    line-height: 14px;
    padding-left: 24px;
}
.tl-year .tl-label {
    bottom: 1px;
}
.tl-month .tl-label {
    padding-left: 23px;
}
.tl-tick {
    border-left: 1px solid #dfe1e6;
}
.chart-body {
    flex: none;
    height: 656px;
    background-image: linear-gradient(to right, #ebecf0 1px, transparent 1px);
    background-size: 56px 100%;
    background-position: 15px 0;
}
.c-row {
    position: relative;
    height: 41px;
    border-bottom: 1px solid #ebecf0;
}
.drop {
    position: absolute;
    top: 11px;
    width: 13px;
    height: 15px;
    color: #7a869a;
}
.bar {
    position: absolute;
    top: 8px;
    height: 24px;
    padding-right: 7px;
    border-radius: 3px;
    color: #fff;
    font-size: 12px;
    font-weight: 700;
    line-height: 24px;
    text-align: center;
    white-space: nowrap;
    overflow: hidden;
}
.bar-green {
    background: #00875a;
}
.bar-blue {
    background: #0052cc;
}
.sprint {
    position: absolute;
    top: 8px;
    height: 24px;
    padding-top: 6px;
    border-radius: 3px;
    background: #172b4d;
    overflow: hidden;
}
.sprint span {
    display: block;
    height: 18px;
    padding-left: 8px;
    border-right: 8px solid #4a5f8a;
    background: #4a5f8a;
    color: #fff;
    font-size: 12px;
    font-weight: 700;
    line-height: 18px;
    white-space: nowrap;
    overflow: hidden;
    clip-path: polygon(5px 0, calc(100% - 5px) 0, 100% 6px, 100% 100%, 0 100%, 0 6px);
}
.sprint-range {
    position: absolute;
    top: 4px;
    height: 31px;
    border: 2px dashed #ff991f;
    background: rgba(255, 196, 0, 0.35);
}
.tick {
    position: absolute;
    top: 8px;
    width: 8px;
    height: 24px;
    border-radius: 4px;
    background: #7a869a;
}
.today {
    position: absolute;
    top: 9px;
    width: 14px;
    height: 718px;
    margin-left: -6px;
    background: linear-gradient(#6554c0, #6554c0) 6px 0 / 2px 100% no-repeat;
}
.today svg {
    width: 14px;
    height: 14px;
    background: #fff;
    border-radius: 50%;
}
.zoom-tools {
    position: absolute;
    top: 31px;
    left: 1170px;
    display: flex;
    gap: 1px;
}
.zoom-tools span {
    width: 32px;
    height: 32px;
    display: flex;
    align-items: center;
    justify-content: center;
    background: #f4f5f7;
    color: #253858;
}
.zoom-tools svg {
    width: 16px;
    height: 16px;
}
.h-scroll {
    margin-top: auto;
    height: 17px;
    display: flex;
    align-items: center;
    justify-content: space-between;
    padding: 0 5px;
    position: relative;
    background: #ebecf0;
}
.sc-arrow {
    width: 6px;
    height: 8px;
}
.sc-thumb {
    position: absolute;
    left: 663px;
    top: 1px;
    width: 30px;
    height: 13px;
    background: #c1c7d0;
}
.feedback {
    position: absolute;
    left: 1757px;
    bottom: 8px;
    width: 138px;
    height: 27px;
    padding-left: 6px;
    border: 1px solid #c1c7d0;
    border-radius: 3px;
    color: #a5adba;
    font-size: 11px;
    font-weight: 500;
    letter-spacing: 0.5px;
    line-height: 25px;
    white-space: nowrap;
    overflow: hidden;
}
.minimap {
    position: absolute;
    left: 1840px;
    bottom: 17px;
    width: 32px;
    height: 32px;
    display: flex;
    align-items: center;
    justify-content: center;
    background: #f4f5f7;
    box-shadow: 0 1px 3px rgba(9, 30, 66, 0.25);
}
.minimap svg {
    width: 17px;
    height: 17px;
}
.infobar {
    flex: 1;
    display: flex;
    align-items: center;
    justify-content: center;
    padding-bottom: 5px;
}
.infobar span {
    writing-mode: vertical-rl;
    transform: rotate(180deg);
    font: 10.5px "Liberation Sans", sans-serif;
    color: #172b4d;
}

/* export modal */
.modal {
    width: 550px;
    height: 298px;
    padding: 0 23px;
    border: 2px solid #111;
    border-radius: 4px;
    background: #fff;
    box-shadow: 0 0 0 1px #fff;
}
.modal-head {
    height: 54px;
    margin-bottom: 21px;
    display: flex;
    align-items: center;
    justify-content: space-between;
}
.modal-head h2 {
    margin: 0;
    font-size: 24px;
    font-weight: 400;
    color: #253858;
}
.modal-close {
    width: 12px;
    height: 12px;
    margin: 0 0 4px 0;
}
.exp-row {
    height: 45px;
    display: flex;
    align-items: flex-start;
    justify-content: space-between;
    padding: 6px 10px 0 12px;
    border-bottom: 1px solid #ebecf0;
    color: #42526e;
}
.exp-row > span {
    line-height: 30px;
}
.exp-btns {
    display: flex;
    gap: 1px;
}
.exp-btns button {
    height: 32px;
    padding: 0 8px 4px;
    border: 0;
    background: #f4f5f7;
    color: #505f79;
    font: 14px Roboto, sans-serif;
}
.exp-btns button:first-child {
    border-radius: 3px 0 0 3px;
}
.exp-btns button:last-child {
    border-radius: 0 3px 3px 0;
}
.exp-btns button:only-child {
    border-radius: 3px;
}

/* download shelf */
.downloads {
    position: relative;
    height: 58px;
    flex: none;
    display: flex;
    align-items: center;
    padding-left: 15px;
    border-top: 2px solid #dadce0;
    background: #fff;
}
.xls {
    width: 27px;
    height: 27px;
}
.dl-name {
    margin-left: 7px;
    width: 135px;
    font-size: 12.8px;
    color: #3c4043;
    white-space: nowrap;
}
.dl-caret {
    width: 12px;
    height: 12px;
    margin-left: 23px;
}
.dl-sep {
    width: 1px;
    height: 44px;
    margin-left: 16px;
    background: #dadce0;
}
.pointer {
    width: 12px;
    height: 20px;
    margin: 12px 0 0 auto;
}
.show-all {
    width: 109px;
    height: 32px;
    margin-left: 6px;
    border: 1px solid #dadce0;
    border-radius: 4px;
    background: #fff;
    color: #1a73e8;
    font: 12px "Noto Sans", sans-serif;
}
.dl-close {
    width: 11px;
    height: 11px;
    margin: 0 12px 0 13px;
}

/* screenshot annotation */
.note-arrow {
    position: absolute;
    z-index: 20;
    left: 183px;
    top: 966px;
    width: 147px;
    height: 78px;
    overflow: visible;
    filter: drop-shadow(1px 2px 2px rgba(0, 0, 0, 0.45));
}
.note-text {
    position: absolute;
    z-index: 20;
    left: 353px;
    top: 940px;
    font: 31.5px "Liberation Sans", sans-serif;
    color: #ff4545;
    white-space: nowrap;
    -webkit-text-stroke: 5px #fff;
    paint-order: stroke fill;
    filter: drop-shadow(1px 2px 1px rgba(0, 0, 0, 0.5));
}
```
